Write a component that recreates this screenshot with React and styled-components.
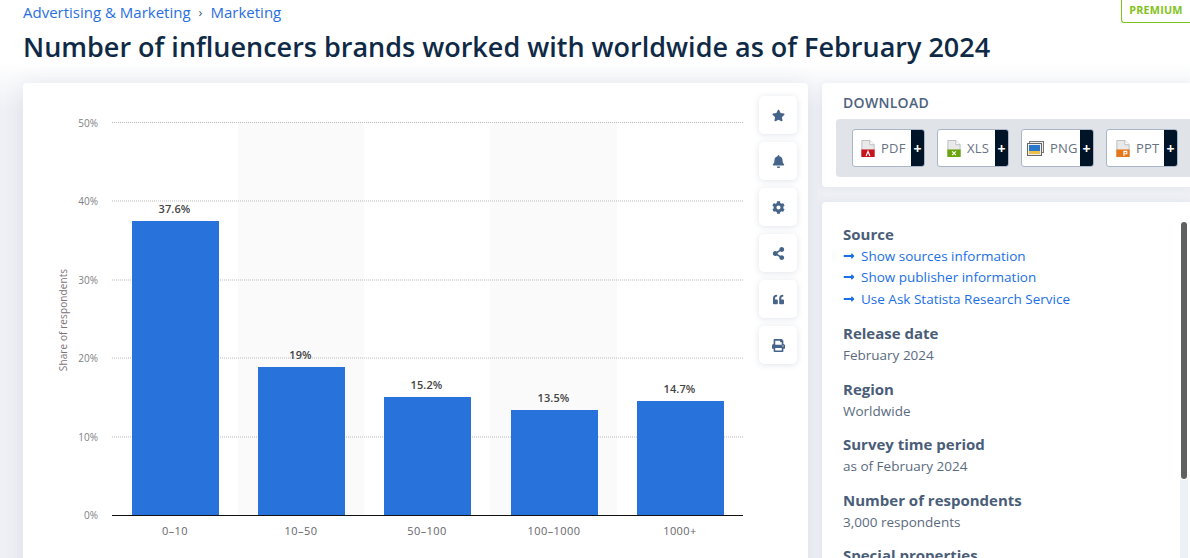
import React from "react";
import styled, { createGlobalStyle } from "styled-components";
import { FaStar, FaBell, FaCog, FaShareAlt, FaQuoteLeft, FaPrint, FaLongArrowAltRight } from "react-icons/fa";

const Global = createGlobalStyle`
  html, body { margin: 0; padding: 0; background: #fff; }
  * { box-sizing: border-box; }
  body { font-family: "Open Sans", "Liberation Sans", sans-serif; }
`;
const Page = styled.div`
  position: relative; width: 1190px; height: 558px; overflow: hidden;
  background: linear-gradient(#fff 0, #fff 62px, #eef0f5 110px, #eef0f5 100%);
`;
const Header = styled.header`padding: 1px 0 0 23px; height: 83px;`;
const Crumbs = styled.nav`display: flex; align-items: center; height: 22px; font-size: 15px; color: #2a6fe0;`;
const Sep = styled.span`margin: 0 8px 0 8px; color: #44566f; font-size: 13px;`;
const Title = styled.h1`margin: 6px 0 0; font-size: 27px; line-height: 36px; font-weight: 600; color: #0f2a46; white-space: nowrap;`;
const Premium = styled.div`
  position: absolute; top: 0; right: 0; width: 69px; height: 23px; background: #fff;
  border: 1px solid #7fc31c; border-top: 0; border-right: 0; border-bottom-left-radius: 3px;
  color: #7fc31c; font-size: 10.8px; font-weight: 700; letter-spacing: .2px;
  display: flex; align-items: center; justify-content: center; padding-bottom: 4px;
`;
const Main = styled.main`display: flex; gap: 14px; padding-left: 23px;`;
const ChartCard = styled.section`
  position: relative; width: 785px; height: 500px; background: #fff; border-radius: 4px 4px 0 0;
  box-shadow: 0 0 20px rgba(70,90,130,.10);
`;
const Tools = styled.div`position: absolute; top: 13px; right: 11px; display: flex; flex-direction: column; gap: 8px;`;
const Tool = styled.button`
  width: 38px; height: 38px; padding: 0; border: 0; border-radius: 5px; background: #fff; color: #46648a;
  box-shadow: 0 1px 6px rgba(70,90,130,.16); display: flex; align-items: center; justify-content: center; font-size: ${p => p.$size || 13}px;
`;
const Side = styled.aside`flex: 1; display: flex; flex-direction: column; gap: 15px;`;
const DownloadCard = styled.section`
  height: 104px; background: #fff; border-radius: 4px 0 0 4px; padding: 10px 0 0 14px;
  box-shadow: 0 0 8px rgba(70,90,130,.08);
`;
const DlTitle = styled.h2`margin: 0 0 6px 7px; font-size: 14px; line-height: 20px; font-weight: 600; color: #4d6280; letter-spacing: .3px;`;
const Tray = styled.div`display: flex; gap: 12px; height: 58px; padding: 10px 0 0 16px; background: #e0e3e8; border-radius: 4px 0 0 4px;`;
const DlBtn = styled.div`
  display: flex; align-items: stretch; height: 38px; width: ${p => p.$w}px; background: #fff; border: 1px solid #a9b6c9; border-radius: 3px; overflow: hidden;
  color: #66727f; font-size: 13px; font-weight: 500; letter-spacing: .2px;
`;
const DlLabel = styled.div`flex: 1; display: flex; align-items: center; gap: 6px; padding-left: ${p => p.$pad}px;`;
const Plus = styled.div`width: 13px; background: #001428; color: #fff; font-size: 14px; font-weight: 700; letter-spacing: 0; display: flex; align-items: center; justify-content: center;`;
const InfoCard = styled.section`
  position: relative; flex: 1; height: 356px; overflow: hidden; background: #fff; border-radius: 4px 0 0 0; padding: 22px 0 0 21px;
  box-shadow: 0 0 8px rgba(70,90,130,.08);
`;
const Track = styled.div`position: absolute; top: 20px; right: 2px; bottom: 0; width: 8px; background: #edf0f4;`;
const Thumb = styled.div`position: absolute; top: 0; right: 1px; width: 6px; height: 257px; border-radius: 3px; background: #5f6160; box-shadow: 0 0 0 1px #fff;`;
const Block = styled.div`margin-bottom: ${p => p.$gap || 12.5}px;`;
const Label = styled.h3`margin: 0; font-size: 15px; line-height: 21px; font-weight: 700; color: #4a5d78;`;
const Value = styled.div`font-size: 13.5px; line-height: 22px; color: #5a6b80;`;
const Link = styled.div`display: flex; align-items: center; gap: 6px; height: 21.5px; font-size: 13.5px; color: #1a6fe6;`;

const FileIcon = ({ color, mark }) => (
  <svg width="14" height="17" viewBox="0 0 14 18" aria-hidden="true">
    <path d="M.5.5H9L13.5 5V17.5H.5Z" fill="#e9e9ea" stroke="#b9bcc0" />
    <path d="M9 .5V5H13.5" fill="#fff" stroke="#b9bcc0" />
    <rect x="0" y="10" width="14" height="8" fill={color} />
    <path d={mark} stroke="#fff" strokeWidth="1.2" fill="none" />
  </svg>
);
const PngIcon = () => (
  <svg width="17" height="15" viewBox="0 0 17 15" aria-hidden="true">
    <rect x="2.5" y=".5" width="14" height="11" fill="#eee" stroke="#777" />
    <rect x=".5" y="2.5" width="14" height="12" fill="#eee" stroke="#666" />
    <rect x="2" y="4" width="11" height="9" fill="#2b77c9" />
    <rect x="2" y="10" width="11" height="3" fill="#e8c04a" />
  </svg>
);

const GRID = [[50, 122.5, 4.5], [40, 201, 3.5], [30, 280, 3.5], [20, 358, 3.5], [10, 437, 3.5]];
const BARS = [
  { x: 132, top: 221, v: "37.6%", c: "0–10" },
  { x: 258, top: 367, v: "19%", c: "10–50" },
  { x: 384, top: 397, v: "15.2%", c: "50–100" },
  { x: 511, top: 410, v: "13.5%", c: "100–1000" },
  { x: 637, top: 401, v: "14.7%", c: "1000+" },
];
const ChartSvg = styled.svg`
  display: block;
  text { font-family: "Open Sans", "Liberation Sans", sans-serif; }
`;
const Chart = () => (
  <ChartSvg width="785" height="475" viewBox="23 83 785 475" role="img">
    <rect x="238" y="123" width="126" height="392" fill="#fafafa" />
    <rect x="490" y="123" width="127" height="392" fill="#fafafa" />
    {GRID.map(([p, y, d]) => (
      <g key={p}>
        <line x1="112" x2="743" y1={y} y2={y} stroke="#bbb" strokeDasharray="1 1" />
        <text x="98" y={y + d} textAnchor="end" fontSize="10" fill="#808084">{p}%</text>
      </g>
    ))}
    <text x="98" y="519" textAnchor="end" fontSize="10" fill="#808084">0%</text>
    <text transform="translate(67 320) rotate(-90)" textAnchor="middle" fontSize="10" fill="#7c7278" letterSpacing=".1">Share of respondents</text>
    {BARS.map(b => (
      <g key={b.c}>
        <rect x={b.x} y={b.top} width="87" height={515 - b.top} fill="#2872dc" />
        <text x={b.x + 42.5} y={b.top - 8} textAnchor="middle" fontSize="11" fontWeight="600" fill="#444" letterSpacing=".1">{b.v}</text>
        <text x={b.x + 43} y="535" textAnchor="middle" fontSize="11" fill="#66666a" letterSpacing=".45">{b.c}</text>
      </g>
    ))}
    <line x1="112" x2="743" y1="515.5" y2="515.5" stroke="#111" />
  </ChartSvg>
);

const LINKS = ["Show sources information", "Show publisher information", "Use Ask Statista Research Service"];
const FACTS = [
  ["Release date", "February 2024"],
  ["Region", "Worldwide"],
  ["Survey time period", "as of February 2024"],
  ["Number of respondents", "3,000 respondents"],
];

export default function App() {
  return (
    <Page>
      <Global />
      <Header>
        <Crumbs>Advertising &amp; Marketing<Sep>›</Sep>Marketing</Crumbs>
        <Title>Number of influencers brands worked with worldwide as of February 2024</Title>
      </Header>
      <Premium>PREMIUM</Premium>
      <Main>
        <ChartCard>
          <Chart />
          <Tools>
            <Tool><FaStar /></Tool>
            <Tool><FaBell /></Tool>
            <Tool><FaCog /></Tool>
            <Tool><FaShareAlt /></Tool>
            <Tool $size={11}><FaQuoteLeft /></Tool>
            <Tool><FaPrint /></Tool>
          </Tools>
        </ChartCard>
        <Side>
          <DownloadCard>
            <DlTitle>DOWNLOAD</DlTitle>
            <Tray>
              <DlBtn $w={73}><DlLabel $pad={8}><FileIcon color="#c8141c" mark="M5 17l2-5 2 5" />PDF</DlLabel><Plus>+</Plus></DlBtn>
              <DlBtn $w={72}><DlLabel $pad={9}><FileIcon color="#6aa510" mark="M5 12l4 4M9 12l-4 4" />XLS</DlLabel><Plus>+</Plus></DlBtn>
              <DlBtn $w={73}><DlLabel $pad={5}><PngIcon />PNG</DlLabel><Plus>+</Plus></DlBtn>
              <DlBtn $w={72}><DlLabel $pad={9}><FileIcon color="#e8761a" mark="M8 17v-5h3v2.5H8" />PPT</DlLabel><Plus>+</Plus></DlBtn>
            </Tray>
          </DownloadCard>
          <InfoCard>
            <Block $gap={13.5}>
              <Label>Source</Label>
              {LINKS.map(l => <Link key={l}><FaLongArrowAltRight size={12} />{l}</Link>)}
            </Block>
            {FACTS.map(([k, v]) => (
              <Block key={k}>
                <Label>{k}</Label>
                <Value>{v}</Value>
              </Block>
            ))}
            <Label>Special properties</Label>
            <Track><Thumb /></Track>
          </InfoCard>
        </Side>
      </Main>
    </Page>
  );
}
